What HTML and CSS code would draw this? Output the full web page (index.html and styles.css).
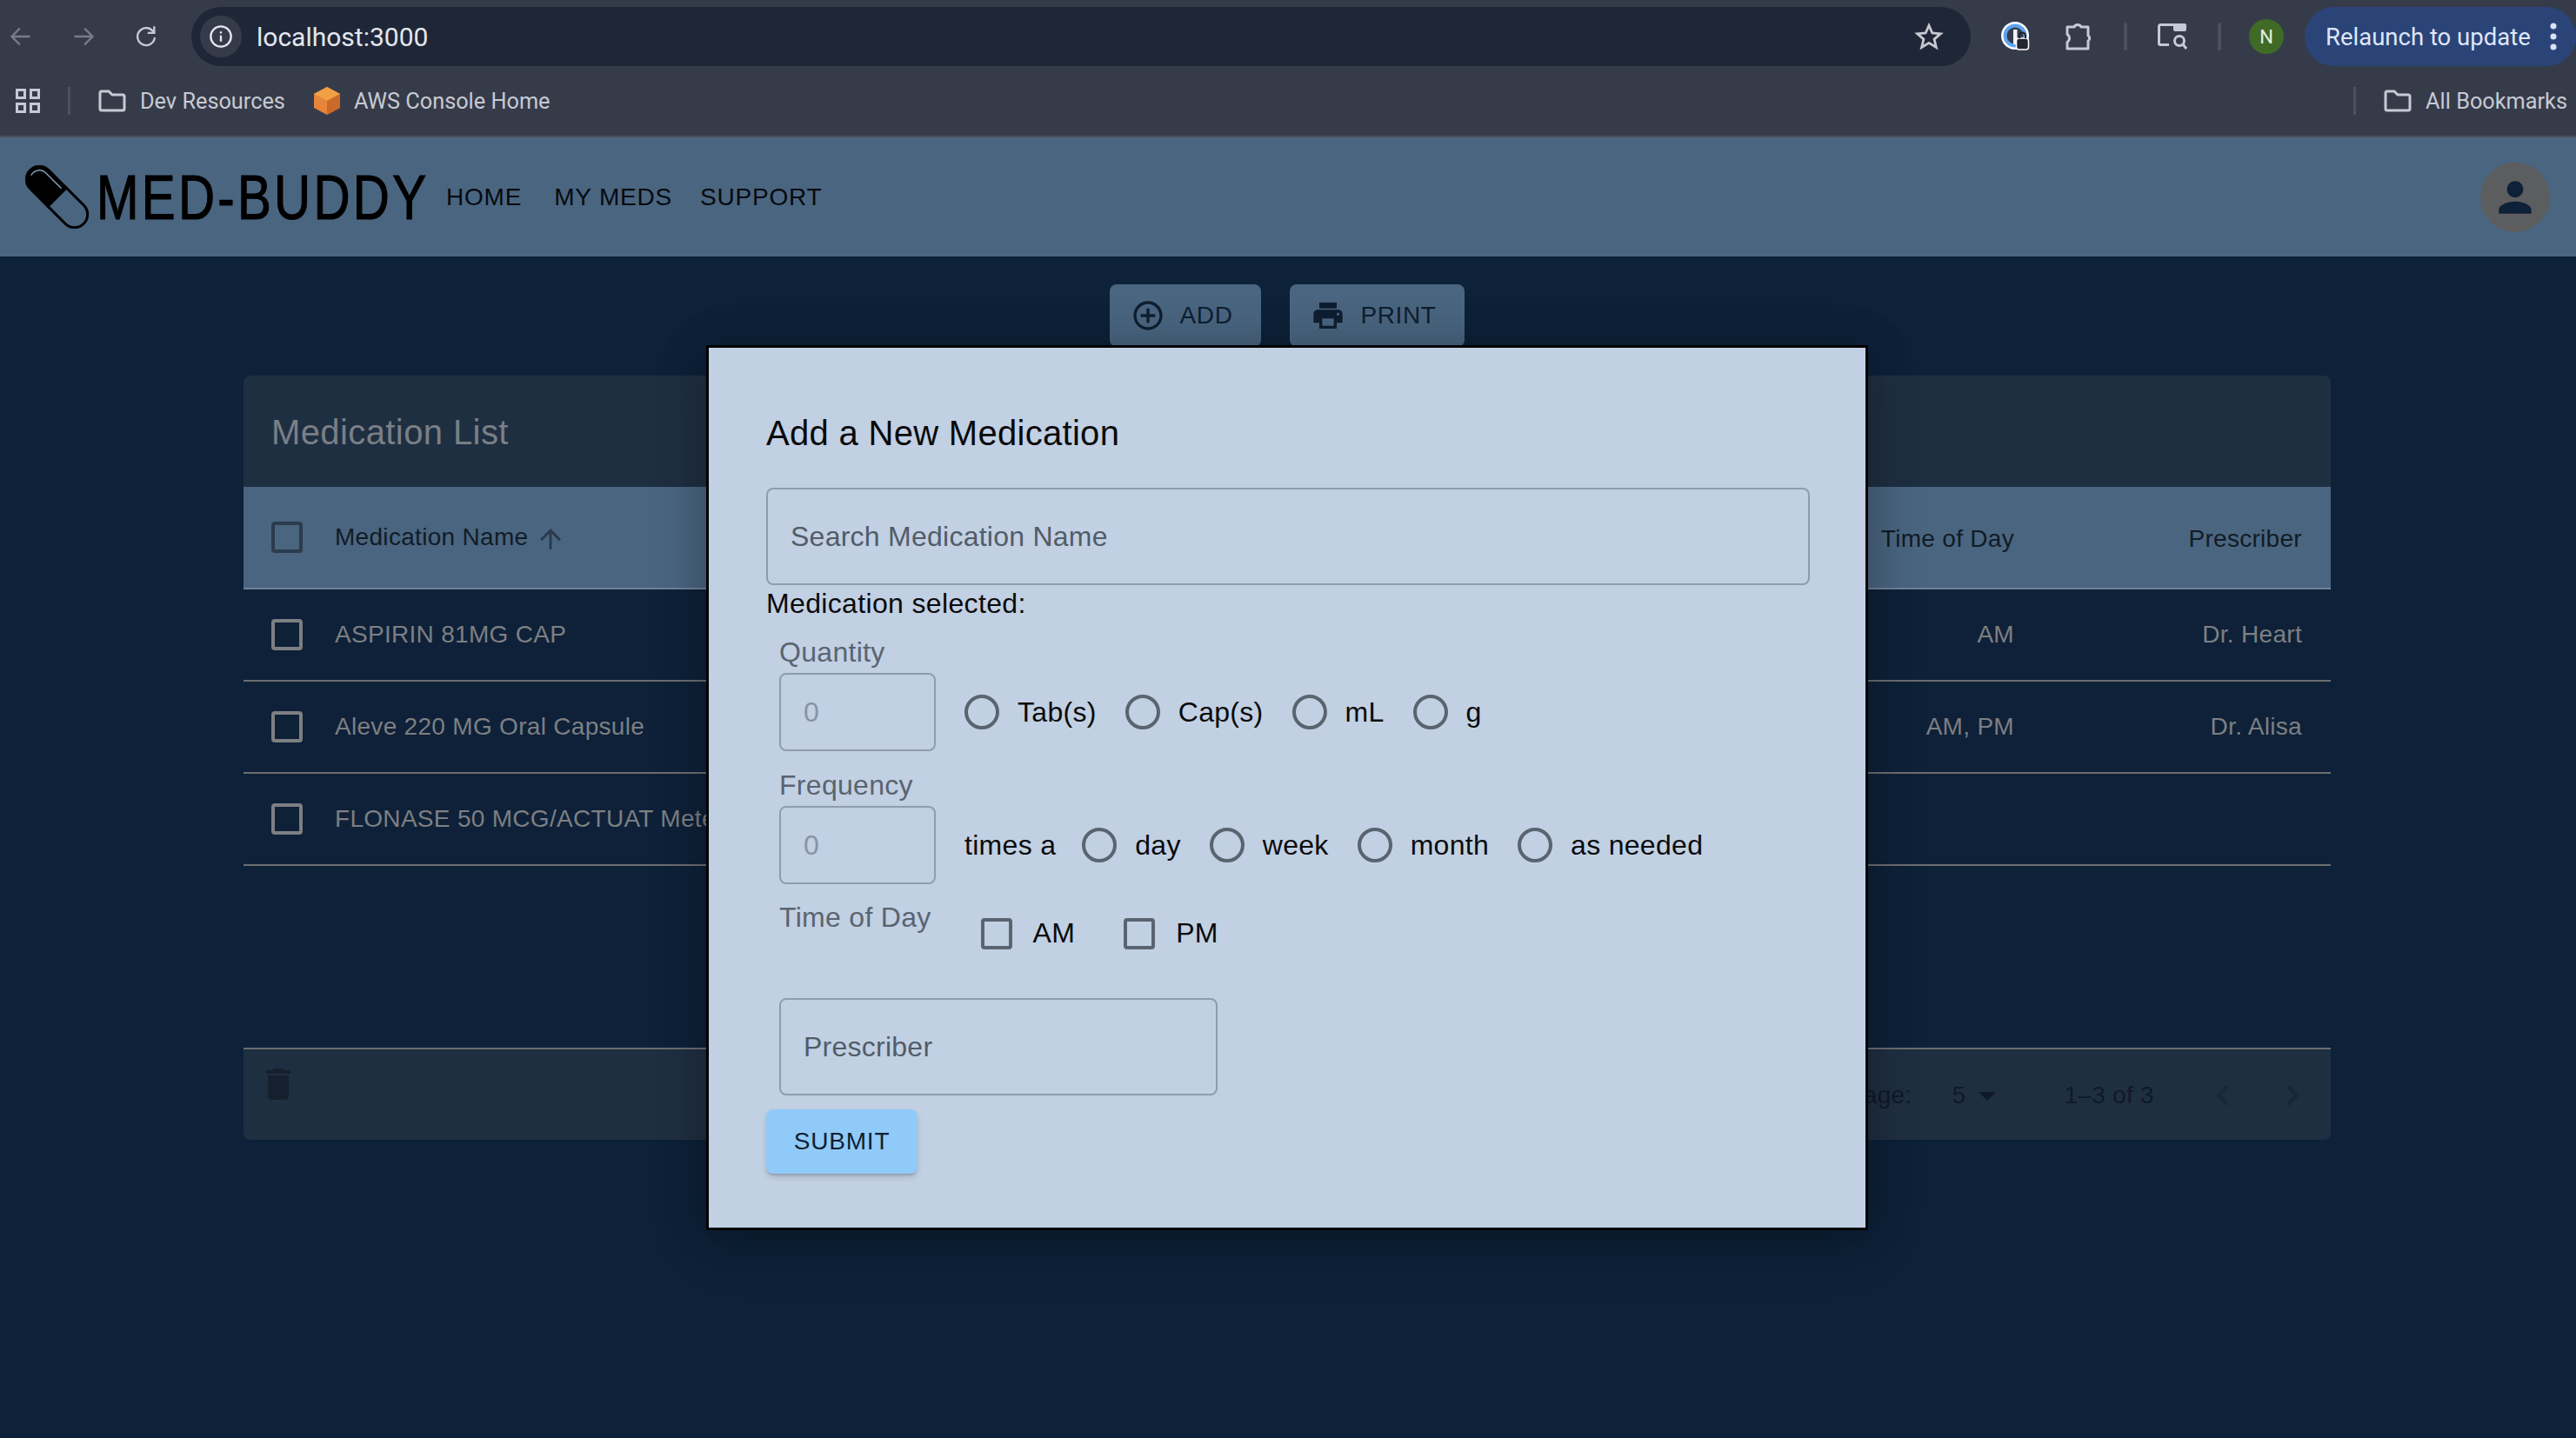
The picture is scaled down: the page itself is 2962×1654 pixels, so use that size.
FILE: index.html
```html
<!DOCTYPE html>
<html lang="en">
<head>
    <meta charset="UTF-8">
    <title>Med-Buddy</title>
    <link rel="stylesheet" href="styles.css">
</head>
<body>
    <div class="browser">
        <div class="toolbar">
            <span class="tool tool-back"><svg width="28" height="28" viewBox="0 0 24 24" fill="none" stroke="#777c89" stroke-width="2"><path d="M21 12H4M11 4l-8 8 8 8"/></svg></span>
            <span class="tool"><svg width="28" height="28" viewBox="0 0 24 24" fill="none" stroke="#777c89" stroke-width="2"><path d="M3 12h17M13 4l8 8-8 8"/></svg></span>
            <span class="tool"><svg width="28" height="28" viewBox="0 0 24 24" fill="none" stroke="#c6cad6" stroke-width="2"><path d="M19.5 8A8.5 8.5 0 1 0 20.5 13"/><path d="M20 2v6.500h-6.500" /></svg></span>
            <div class="omnibox">
                <span class="site-info"><svg width="28" height="28" viewBox="0 0 24 24" fill="none" stroke="#e3e6ee" stroke-width="2"><circle cx="12" cy="12" r="10"/><path d="M12 11v6M12 7v2"/></svg></span>
                <span class="url">localhost:3000</span>
                <svg class="star" width="34" height="34" viewBox="0 0 24 24" fill="none" stroke="#c6c8cf" stroke-width="2"><path d="M12 3l2.700 6.200 6.700.6-5.100 4.400 1.600 6.600L12 17.200l-5.900 3.600 1.600-6.600-5.100-4.400 6.700-.6z"/></svg>
            </div>
            <span class="tool tool-first"><svg width="34" height="34" viewBox="0 0 34 34"><circle cx="16" cy="16" r="16" fill="#fff"/><circle cx="16" cy="16" r="11.500" fill="#363b4a" stroke="#5ea3ef" stroke-width="4"/><rect x="14" y="9" width="4.500" height="17" fill="#f2f4f8"/><rect x="17.500" y="19" width="14" height="13" rx="3" fill="#23262e" stroke="#fff" stroke-width="1.500"/><path d="M21 19v-3a3.500 3.500 0 0 1 7 0v3" fill="none" stroke="#23262e" stroke-width="2"/></svg></span>
            <span class="tool"><svg width="32" height="34" viewBox="0 0 32 34" fill="none" stroke="#c6cad6" stroke-width="3" stroke-linejoin="round"><path d="M3 6h8a4.500 4.500 0 0 1 8 0h8v10a3.500 3.500 0 0 1 0 6v9H3v-7.500a5.500 5.500 0 0 0 2.500-4.500 5.500 5.500 0 0 0-2.500-4.500z"/></svg></span>
            <span class="tool-sep"></span>
            <span class="tool"><svg width="34" height="30" viewBox="0 0 34 30" fill="none" stroke="#c6cad6" stroke-width="3"><path d="M24 1.500H3a1.500 1.500 0 0 0-1.500 1.500v20a1.500 1.500 0 0 0 1.500 1.500h10"/><rect x="18" y="0" width="15" height="9" rx="2" fill="#c6cad6" stroke="none"/><circle cx="25" cy="20" r="5.500"/><path d="M29 24l4 5"/></svg></span>
            <span class="tool-sep"></span>
            <span class="tool"><span class="profile">N</span></span>
            <div class="relaunch">
                <span>Relaunch to update</span>
                <svg width="8" height="32" viewBox="0 0 8 32" fill="#d9e2f7"><circle cx="4" cy="4" r="3.500"/><circle cx="4" cy="16" r="3.500"/><circle cx="4" cy="28" r="3.500"/></svg>
            </div>
        </div>
        <div class="bookmarks">
            <svg class="apps" width="28" height="28" viewBox="0 0 28 28" fill="none" stroke="#c6cad6" stroke-width="3"><rect x="1.500" y="1.500" width="9" height="9"/><rect x="17.500" y="1.500" width="9" height="9"/><rect x="1.500" y="17.500" width="9" height="9"/><rect x="17.500" y="17.500" width="9" height="9"/></svg>
            <span class="bm-sep"></span>
            <svg class="folder" width="32" height="26" viewBox="0 0 32 26" fill="none" stroke="#c7cad3" stroke-width="3"><path d="M2 4a2 2 0 0 1 2-2h8l4 4h12a2 2 0 0 1 2 2v14a2 2 0 0 1-2 2H4a2 2 0 0 1-2-2z"/></svg>
            <span class="bm-label">Dev Resources</span>
            <svg class="aws" width="30" height="32" viewBox="0 0 30 32"><path d="M15 0l15 8v16l-15 8L0 24V8z" fill="#e8833a"/><path d="M15 0l15 8-15 8L0 8z" fill="#f2a044"/><path d="M15 16l15-8v16l-15 8z" fill="#c96a28"/></svg>
            <span class="bm-label">AWS Console Home</span>
            <span class="bm-sep bm-sep-right"></span>
            <svg class="folder" width="32" height="26" viewBox="0 0 32 26" fill="none" stroke="#c7cad3" stroke-width="3"><path d="M2 4a2 2 0 0 1 2-2h8l4 4h12a2 2 0 0 1 2 2v14a2 2 0 0 1-2 2H4a2 2 0 0 1-2-2z"/></svg>
            <span class="bm-label">All Bookmarks</span>
        </div>
    </div>

    <div class="page">
        <header class="app-bar">
            <svg class="pill" width="73" height="73" viewBox="0 0 73 73">
                <g transform="rotate(-45 36.500 36.500)">
                    <path d="M21.500 36.500V8a15 15 0 0 1 30 0v28.500z" fill="#000" stroke="#000" stroke-width="3"/>
                    <path d="M21.500 36.500V65a15 15 0 0 0 30 0V36.500z" fill="none" stroke="#000" stroke-width="3"/>
                    <path d="M47 33V8A10.500 10.500 0 0 0 33-2" fill="none" stroke="#7d98b2" stroke-width="1.500"/>
                </g>
            </svg>
            <span class="brand">MED-BUDDY</span>
            <nav class="nav">
                <a class="nav-link">HOME</a>
                <a class="nav-link">MY MEDS</a>
                <a class="nav-link">SUPPORT</a>
            </nav>
            <span class="user"><svg width="56" height="56" viewBox="0 0 24 24" fill="#0d2138"><path d="M12 12c2.210 0 4-1.790 4-4s-1.790-4-4-4-4 1.790-4 4 1.790 4 4 4zm0 2c-2.670 0-8 1.340-8 4v2h16v-2c0-2.660-5.330-4-8-4z"/></svg></span>
        </header>

        <main class="content">
            <div class="actions">
                <button class="action-btn"><svg width="40" height="40" viewBox="0 0 24 24" fill="#0f1f30"><path d="M13 7h-2v4H7v2h4v4h2v-4h4v-2h-4V7zm-1-5C6.480 2 2 6.480 2 12s4.480 10 10 10 10-4.480 10-10S17.520 2 12 2zm0 18c-4.410 0-8-3.590-8-8s3.590-8 8-8 8 3.590 8 8-3.590 8-8 8z"/></svg>ADD</button>
                <button class="action-btn"><svg width="40" height="40" viewBox="0 0 24 24" fill="#0f1f30"><path d="M19 8H5c-1.660 0-3 1.340-3 3v6h4v4h12v-4h4v-6c0-1.660-1.340-3-3-3zm-3 11H8v-5h8v5zm3-7c-.55 0-1-.45-1-1s.45-1 1-1 1 .45 1 1-.45 1-1 1zm-1-9H6v4h12V3z"/></svg>PRINT</button>
            </div>

            <section class="panel">
                <h2 class="panel-title">Medication List</h2>
                <table class="med-table">
                    <colgroup>
                        <col class="col-check">
                        <col>
                        <col class="col-time">
                        <col class="col-prescriber">
                    </colgroup>
                    <thead>
                        <tr>
                            <th class="cell-check"><span class="table-box table-box-head"></span></th>
                            <th class="cell-name">Medication Name<svg class="sort" width="36" height="36" viewBox="0 0 24 24" fill="#2b3a4c"><path d="M4 12l1.410 1.410L11 7.830V20h2V7.830l5.580 5.590L20 12l-8-8-8 8z"/></svg></th>
                            <th class="cell-right">Time of Day</th>
                            <th class="cell-right cell-last">Prescriber</th>
                        </tr>
                    </thead>
                    <tbody>
                        <tr>
                            <td class="cell-check"><span class="table-box"></span></td>
                            <td class="cell-name">ASPIRIN 81MG CAP</td>
                            <td class="cell-right">AM</td>
                            <td class="cell-right cell-last">Dr. Heart</td>
                        </tr>
                        <tr>
                            <td class="cell-check"><span class="table-box"></span></td>
                            <td class="cell-name">Aleve 220 MG Oral Capsule</td>
                            <td class="cell-right">AM, PM</td>
                            <td class="cell-right cell-last">Dr. Alisa</td>
                        </tr>
                        <tr>
                            <td class="cell-check"><span class="table-box"></span></td>
                            <td class="cell-name">FLONASE 50 MCG/ACTUAT Metered Dose Nasal Spray</td>
                            <td class="cell-right"></td>
                            <td class="cell-right cell-last"></td>
                        </tr>
                        <tr class="empty-row"><td colspan="4"></td></tr>
                    </tbody>
                </table>
                <footer class="panel-footer">
                    <svg class="trash" width="48" height="48" viewBox="0 0 24 24" fill="#161f2e"><path d="M6 19c0 1.100.9 2 2 2h8c1.100 0 2-.9 2-2V7H6v12zM19 4h-3.500l-1-1h-5l-1 1H5v2h14V4z"/></svg>
                    <div class="pager">
                        <span class="pager-label">Rows per page:</span>
                        <span class="pager-size">5</span>
                        <svg class="pager-caret" width="48" height="48" viewBox="0 0 24 24" fill="#10192a"><path d="M7 10l5 5 5-5z"/></svg>
                        <span class="pager-count">1–3 of 3</span>
                        <svg class="pager-prev" width="48" height="48" viewBox="0 0 24 24" fill="#1a2636"><path d="M15.410 7.410 14 6l-6 6 6 6 1.410-1.410L10.830 12z"/></svg>
                        <svg class="pager-next" width="48" height="48" viewBox="0 0 24 24" fill="#1a2636"><path d="M10 6 8.590 7.410 13.170 12l-4.580 4.590L10 18l6-6z"/></svg>
                    </div>
                </footer>
            </section>
        </main>

        <div class="overlay">
            <form class="modal">
                <h2 class="modal-title">Add a New Medication</h2>
                <input class="field field-search" placeholder="Search Medication Name">
                <p class="selected">Medication selected:</p>

                <div class="group">
                    <label class="group-label">Quantity</label>
                    <div class="group-row">
                        <input class="field field-number" placeholder="0">
                        <div class="options">
                            <label class="option"><input type="radio" class="radio" name="unit">Tab(s)</label>
                            <label class="option"><input type="radio" class="radio" name="unit">Cap(s)</label>
                            <label class="option"><input type="radio" class="radio" name="unit">mL</label>
                            <label class="option"><input type="radio" class="radio" name="unit">g</label>
                        </div>
                    </div>
                </div>

                <div class="group group-freq">
                    <label class="group-label">Frequency</label>
                    <div class="group-row">
                        <input class="field field-number" placeholder="0">
                        <span class="times">times a</span>
                        <div class="options">
                            <label class="option"><input type="radio" class="radio" name="freq">day</label>
                            <label class="option"><input type="radio" class="radio" name="freq">week</label>
                            <label class="option"><input type="radio" class="radio" name="freq">month</label>
                            <label class="option"><input type="radio" class="radio" name="freq">as needed</label>
                        </div>
                    </div>
                </div>

                <div class="group-time">
                    <label class="group-label">Time of Day</label>
                    <div class="checks">
                        <label class="check"><input type="checkbox" class="checkbox">AM</label>
                        <label class="check"><input type="checkbox" class="checkbox">PM</label>
                    </div>
                </div>

                <input class="field field-prescriber" placeholder="Prescriber">
                <button type="button" class="submit">SUBMIT</button>
            </form>
        </div>
    </div>
</body>
</html>
```

FILE: styles.css
```css
* {
    box-sizing: border-box;
}

html, body {
    height: 100%;
}

body {
    margin: 0;
    display: flex;
    flex-direction: column;
    overflow: hidden;
    background-color: #0d2138;
    font-family: "Liberation Sans", Arial, sans-serif;
}

/* browser chrome */
.browser {
    height: 158px;
    flex-shrink: 0;
    background-color: #363b4a;
    border-bottom: 2px solid #4a4e59;
    font-family: Roboto, "Liberation Sans", sans-serif;
}

.toolbar {
    display: flex;
    align-items: center;
    height: 84px;
}

.tool {
    display: flex;
    align-items: center;
    justify-content: center;
    width: 72px;
    height: 68px;
    flex-shrink: 0;
}

.tool-back {
    margin-left: -12px;
}

.tool-first {
    margin-left: 16px;
}

.tool-sep {
    width: 4px;
    height: 32px;
    margin: 0 16px;
    background-color: #4c515f;
    border-radius: 2px;
    flex-shrink: 0;
}

.omnibox {
    display: flex;
    align-items: center;
    flex: 1;
    height: 68px;
    margin-left: 16px;
    padding-left: 10px;
    padding-right: 31px;
    border-radius: 34px;
    background-color: #1f2637;
}

.site-info {
    display: flex;
    align-items: center;
    justify-content: center;
    width: 48px;
    height: 48px;
    border-radius: 50%;
    background-color: #363b4a;
}

.url {
    margin-left: 17px;
    flex: 1;
    font-size: 30px;
    color: #e3e6ee;
}

.profile {
    display: flex;
    align-items: center;
    justify-content: center;
    width: 40px;
    height: 40px;
    border-radius: 50%;
    background-color: #3f6b27;
    color: #e8efe2;
    font-size: 22px;
}

.relaunch {
    display: flex;
    align-items: center;
    justify-content: space-between;
    width: 312px;
    height: 68px;
    margin-left: 8px;
    padding: 0 22px 0 24px;
    border-radius: 34px;
    background-color: #2b4478;
    color: #dfe6f8;
    font-size: 27.500px;
}

.bookmarks {
    display: flex;
    align-items: center;
    height: 72px;
    padding-left: 18px;
    padding-bottom: 8px;
}

.bm-sep {
    width: 3px;
    height: 32px;
    margin: 0 32px;
    background-color: #4c515f;
    flex-shrink: 0;
}

.bm-sep-right {
    margin-left: auto;
}

.bm-label {
    margin-left: 16px;
    font-size: 25.300px;
    color: #c7cad3;
    white-space: nowrap;
}

.aws {
    margin-left: 33px;
}

.bm-label:last-child {
    margin-right: 10px;
}

/* app */
.page {
    position: relative;
    flex: 1;
    display: flex;
    flex-direction: column;
    min-height: 0;
}

.app-bar {
    display: flex;
    align-items: center;
    height: 137px;
    flex-shrink: 0;
    padding-left: 29px;
    padding-right: 30px;
    background-color: #4a6580;
}

.brand {
    width: 380px;
    margin-left: 9px;
    font-size: 72px;
    letter-spacing: 4px;
    color: #000;
    white-space: nowrap;
    transform: scaleX(.81);
    transform-origin: left center;
    -webkit-text-stroke: 1.200px #000;
}

.nav {
    display: flex;
    gap: 32px;
    margin-left: 22px;
}

.nav-link {
    font-size: 28px;
    letter-spacing: .8px;
    color: #060a0f;
}

.nav-link:first-child {
    margin-right: 5px;
}

.user {
    display: flex;
    align-items: center;
    justify-content: center;
    width: 80px;
    height: 80px;
    margin-left: auto;
    border-radius: 50%;
    background-color: #5c5d5e;
}

.content {
    display: flex;
    flex-direction: column;
    align-items: center;
    padding-right: 2px;
}

.actions {
    display: flex;
    gap: 33px;
    margin-top: 32px;
}

.action-btn {
    display: flex;
    align-items: center;
    gap: 17px;
    height: 72px;
    padding: 0 33px 0 24px;
    border: 0;
    border-radius: 8px;
    background-color: #4a6580;
    font-family: inherit;
    font-size: 28px;
    letter-spacing: .6px;
    color: #0f1f30;
}

.panel {
    width: 2400px;
    margin-top: 33px;
    border-radius: 8px;
    overflow: hidden;
    background-color: #0e2139;
}

.panel-title {
    display: flex;
    align-items: center;
    height: 128px;
    margin: 0;
    padding: 2px 0 0 32px;
    background-color: #1f2f42;
    font-size: 40px;
    font-weight: 400;
    letter-spacing: .4px;
    color: #7a7f85;
}

.med-table {
    width: 100%;
    border-collapse: collapse;
    table-layout: fixed;
    font-size: 28px;
    letter-spacing: .3px;
}

.col-check {
    width: 105px;
}

.col-time {
    width: 400px;
}

.col-prescriber {
    width: 331px;
}

.med-table th {
    height: 117px;
    padding: 3px 0 0;
    background-color: #4a6580;
    border-bottom: 2px solid #6f8396;
    font-weight: 400;
    color: #111c26;
    text-align: left;
}

.med-table td {
    height: 106px;
    padding: 0;
    border-bottom: 2px solid #6c6e70;
    color: #7d7f82;
}

.med-table .cell-check {
    padding-left: 32px;
    padding-top: 0;
}

.cell-name {
    white-space: nowrap;
    overflow: hidden;
}

.med-table .cell-right {
    padding-right: 33px;
    text-align: right;
}

.table-box {
    display: block;
    width: 36px;
    height: 36px;
    border: 4px solid #7d7f82;
    border-radius: 4px;
}

.table-box-head {
    border-color: #2c3b4d;
}

.sort {
    margin-left: 8px;
    vertical-align: -11px;
}

.med-table .empty-row td {
    height: 211px;
}

.panel-footer {
    display: flex;
    justify-content: space-between;
    height: 104px;
    padding: 16px 0 0 16px;
    background-color: #1f2f42;
}

.pager {
    display: flex;
    align-items: center;
    height: 74px;
    padding-right: 20px;
    font-size: 28px;
    letter-spacing: .3px;
    color: #10192a;
}

.pager-size {
    margin-left: 46px;
}

.pager-caret {
    margin-left: 1px;
}

.pager-count {
    margin-left: 64px;
}

.pager-prev {
    margin-left: 55px;
}

.pager-next {
    margin-left: 32px;
}

/* add medication dialog */
.overlay {
    position: absolute;
    inset: 0;
    display: flex;
    align-items: center;
    justify-content: center;
    padding-right: 2px;
}

.modal {
    width: 1336px;
    height: 1018px;
    padding: 63px 66px 0;
    border: 3px solid #000;
    background-color: #c1d0e3;
    box-shadow: 0 16px 60px rgba(0, 0, 0, .2), 0 0 50px rgba(0, 0, 0, .15);
}

.modal-title {
    margin: 0;
    font-size: 40px;
    line-height: 70px;
    font-weight: 400;
    letter-spacing: .3px;
    color: #0a0a0a;
}

.field {
    display: block;
    padding: 0 0 0 26px;
    border: 2px solid #8f9db0;
    border-radius: 8px;
    outline: 0;
    background: transparent;
    font-family: inherit;
    font-size: 32px;
    letter-spacing: .25px;
}

.field::placeholder {
    color: #525c68;
    opacity: 1;
}

.field-search {
    width: 1200px;
    height: 112px;
    margin-top: 28px;
}

.selected {
    margin: 1px 0 0;
    font-size: 32px;
    line-height: 40px;
    letter-spacing: .35px;
    color: #0a0a0a;
}

.group {
    margin: 16px 0 0 15px;
}

.group-freq {
    margin-top: 19px;
}

.group-label {
    display: block;
    font-size: 32px;
    line-height: 40px;
    letter-spacing: .3px;
    color: #5a6470;
}

.group-row {
    display: flex;
    align-items: center;
    margin-top: 4px;
}

.field-number {
    width: 180px;
    height: 90px;
}

.field-number::placeholder {
    color: #8795a5;
}

.times {
    margin-left: 33px;
    font-size: 32px;
    letter-spacing: .3px;
    color: #0a0a0a;
}

.options {
    display: flex;
    gap: 33px;
    margin-left: 33px;
}

.times + .options {
    margin-left: 30px;
}

.option,
.check {
    display: flex;
    align-items: center;
    gap: 21px;
    font-size: 32px;
    letter-spacing: .3px;
    color: #0a0a0a;
}

.radio,
.checkbox {
    appearance: none;
    flex-shrink: 0;
    margin: 0;
    border: 4px solid #5a6470;
    background: transparent;
}

.radio {
    width: 40px;
    height: 40px;
    border-radius: 50%;
}

.checkbox {
    width: 36px;
    height: 36px;
    border-radius: 4px;
}

.group-time {
    display: flex;
    align-items: flex-start;
    margin: 18px 0 0 15px;
}

.checks {
    display: flex;
    gap: 56px;
    margin-left: 57px;
    margin-top: 20px;
}

.check {
    gap: 24px;
}

.field-prescriber {
    width: 504px;
    height: 112px;
    margin: 56px 0 0 15px;
}

.submit {
    display: block;
    width: 174px;
    height: 74px;
    margin-top: 16px;
    border: 0;
    border-radius: 8px;
    background-color: #90caf9;
    box-shadow: 0 3px 3px -2px rgba(0, 0, 0, .2), 0 4px 6px rgba(0, 0, 0, .14);
    font-family: inherit;
    font-size: 28px;
    letter-spacing: .8px;
    color: #0f1f2f;
}
```
